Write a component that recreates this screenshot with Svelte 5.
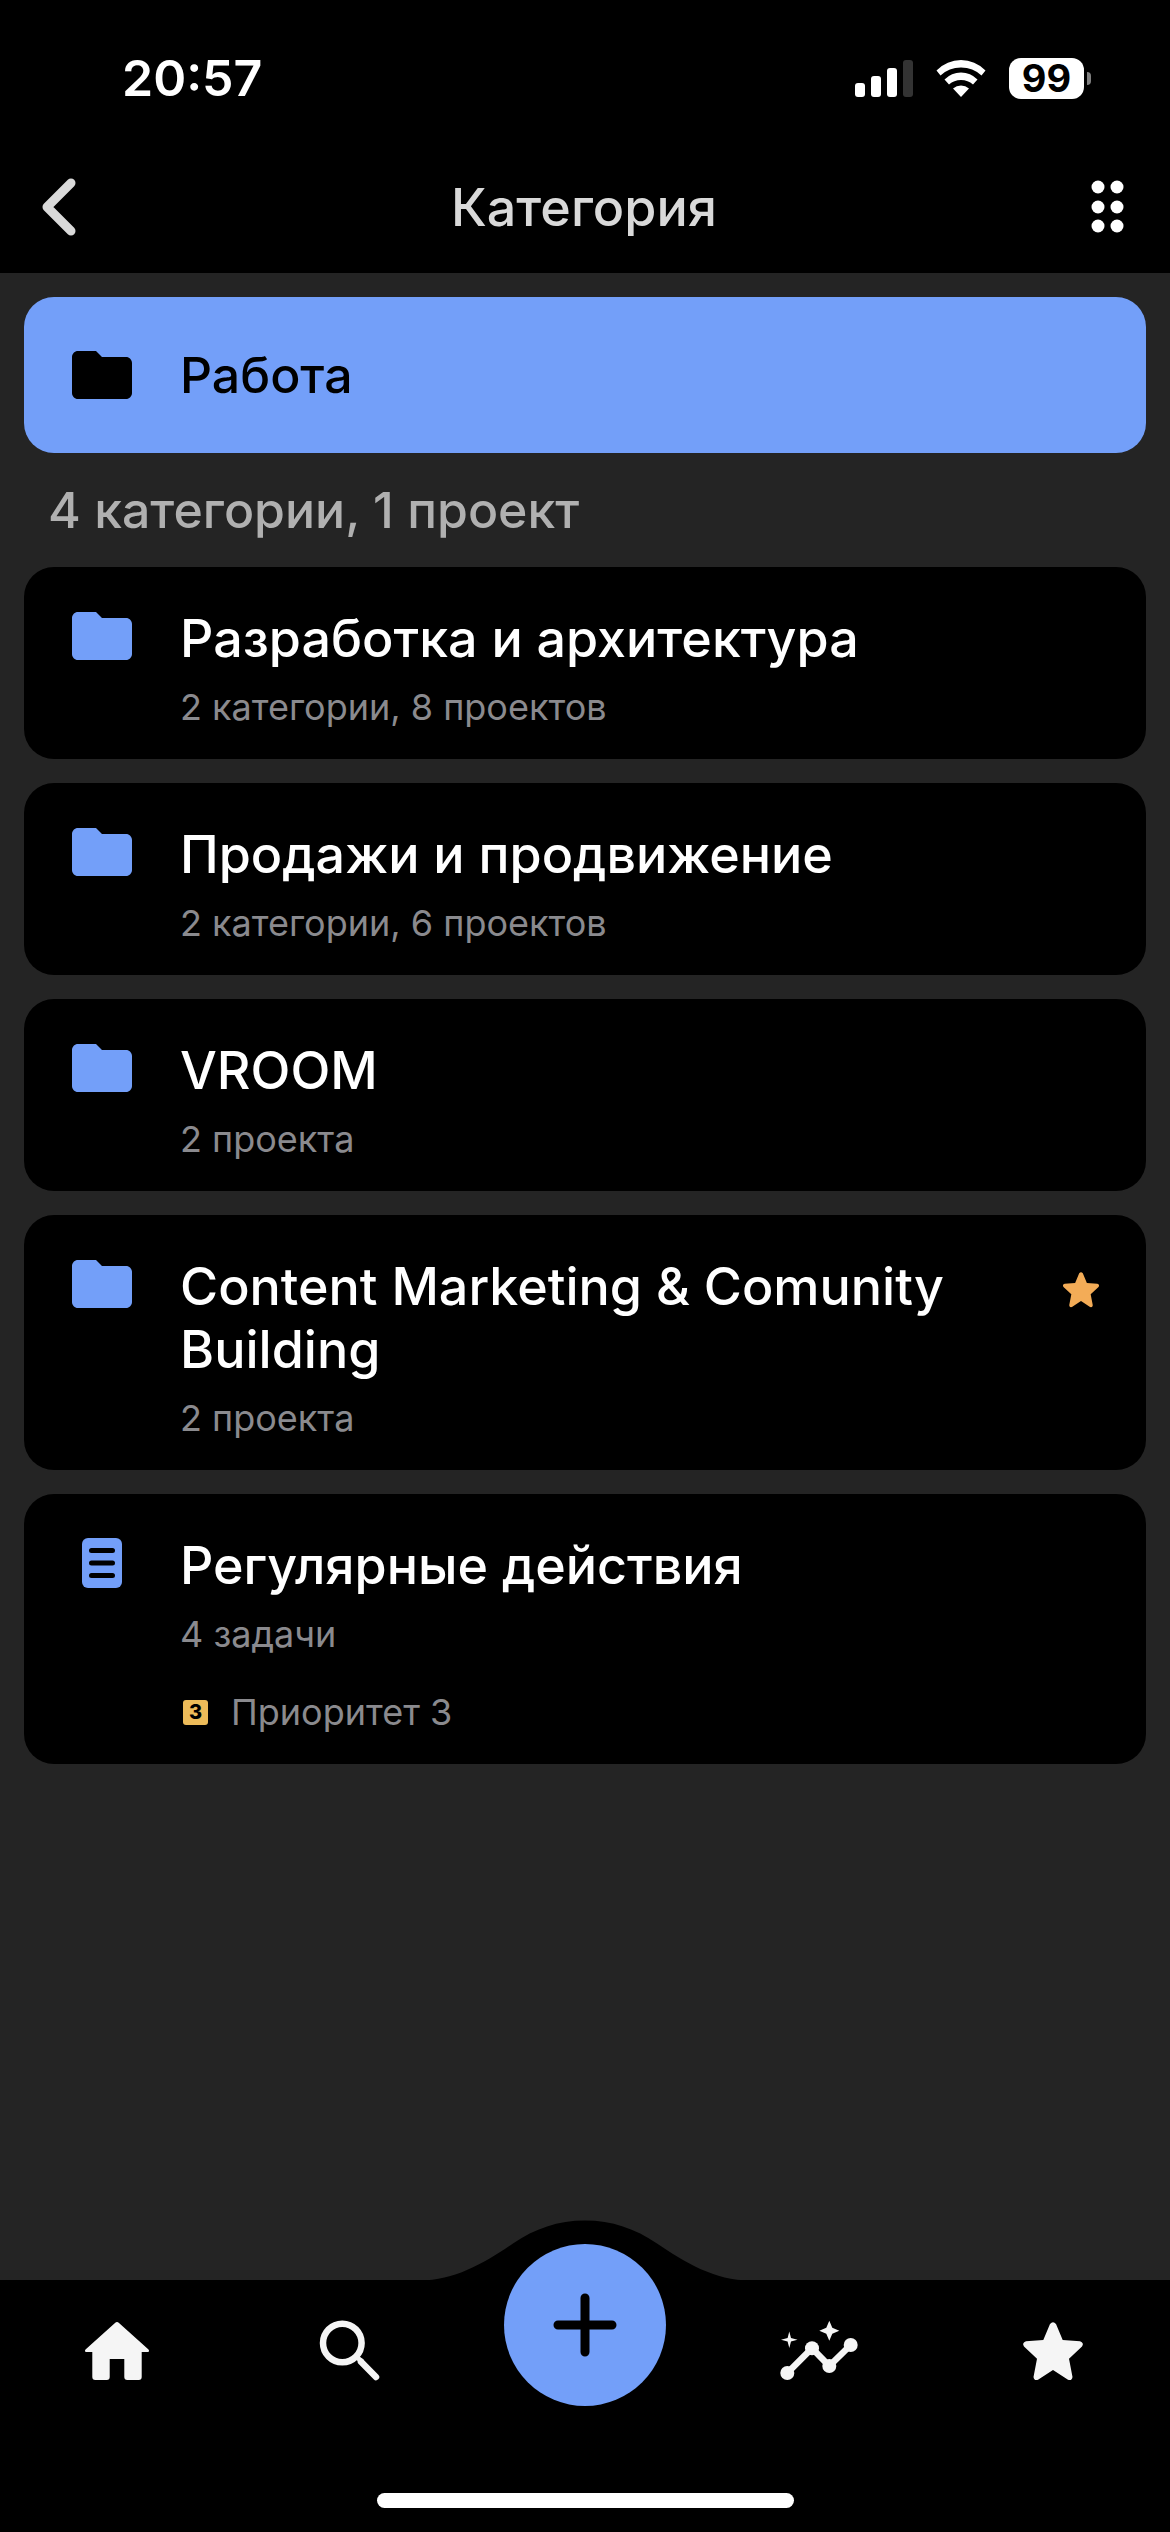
<script lang="ts">
	type Item = {
		kind: 'folder' | 'project'
		title: string
		info: string
		starred?: boolean
		priority?: number
	}

	const category = 'Работа'
	const summary = '4 категории, 1 проект'

	const items: Item[] = [
		{ kind: 'folder', title: 'Разработка и архитектура', info: '2 категории, 8 проектов' },
		{ kind: 'folder', title: 'Продажи и продвижение', info: '2 категории, 6 проектов' },
		{ kind: 'folder', title: 'VROOM', info: '2 проекта' },
		{
			kind: 'folder',
			title: 'Content Marketing & Comunity Building',
			info: '2 проекта',
			starred: true
		},
		{ kind: 'project', title: 'Регулярные действия', info: '4 задачи', priority: 3 }
	]

	const starPath =
		'M45 22Q48 18.500 51 22L57.700 38L75 39.300Q79.500 41 77 44.500L64 56.700L67.500 75Q67 79 63 77.800L48 68L33 77.800Q29 79 28.500 75L32 56.700L19 44.500Q16.500 41 21 39.300L38.300 38Z'
</script>

{#snippet folder()}
	<svg class="icon" viewBox="0 0 24 24" aria-hidden="true">
		<path
			d="M10 4H4c-1.1 0-2 .9-2 2v12c0 1.1.9 2 2 2h16c1.1 0 2-.9 2-2V8c0-1.1-.9-2-2-2h-8l-2-2z"
		/>
	</svg>
{/snippet}

<div class="page">
	<header>
		<div class="status">
			<span class="time">20:57</span>
			<div class="indicators">
				<svg width="58" height="38" viewBox="0 0 58 38" aria-hidden="true">
					<rect x="0" y="24" width="10" height="14" rx="3" />
					<rect x="16" y="17" width="10" height="21" rx="3" />
					<rect x="32" y="9" width="10" height="29" rx="3" />
					<rect class="dim" x="48" y="1" width="10" height="37" rx="3" />
				</svg>
				<svg width="50" height="38" viewBox="0 0 50 38" aria-hidden="true">
					<path d="M0.500 11.500Q11 1 25 1T49.500 11.500L45.500 16.500Q37 8.500 25 8.500T4.500 16.500Z" />
					<path d="M8.500 20.500Q15.500 13.500 25 13.500T41.500 20.500L37 25.500Q32 21 25 21T13 25.500Z" />
					<path d="M17 29.500Q20.500 26.500 25 26.500T33 29.500L25 38Z" />
				</svg>
				<div class="battery">
					<span class="charge">99</span>
					<span class="nub"></span>
				</div>
			</div>
		</div>
		<div class="bar">
			<button type="button" aria-label="Назад">
				<svg width="36" height="60" viewBox="0 0 36 60" aria-hidden="true">
					<path class="chevron" d="M30 6L6 30L30 54" />
				</svg>
			</button>
			<h1>Категория</h1>
			<button type="button" aria-label="Меню">
				<svg width="33" height="54" viewBox="0 0 33 54" aria-hidden="true">
					{#each [7, 27, 46] as cy}
						<circle cx="7" {cy} r="6.5" />
						<circle cx="26" {cy} r="6.5" />
					{/each}
				</svg>
			</button>
		</div>
	</header>

	<main>
		<a class="card current" href="#current">
			{@render folder()}
			<h2>{category}</h2>
		</a>
		<p class="summary">{summary}</p>

		<ul>
			{#each items as item}
				<li>
					<a class="card" href="#item">
						{#if item.kind === 'folder'}
							{@render folder()}
						{:else}
							<svg class="icon" viewBox="0 0 72 72" aria-hidden="true">
								<rect x="16" y="11" width="40" height="50" rx="6" />
								<path class="lines" d="M25.500 23.500H46.500M25.500 36H46.500M25.500 48.500H46.500" />
							</svg>
						{/if}
						<div class="content">
							<h3>{item.title}</h3>
							<p>{item.info}</p>
							{#if item.priority}
								<p class="priority">
									<span class="badge" aria-hidden="true">{item.priority}</span>
									Приоритет {item.priority}
								</p>
							{/if}
						</div>
						{#if item.starred}
							<svg class="star" viewBox="0 0 96 96" aria-label="Избранное">
								<path d={starPath} />
							</svg>
						{/if}
					</a>
				</li>
			{/each}
		</ul>
	</main>

	<nav>
		<div class="tabs">
			<a href="#home" aria-label="Главная">
				<svg viewBox="0 0 96 96" aria-hidden="true">
					<path
						d="M46 21Q48 19 50 21L79.500 47.500Q81 50 78.500 50H72.700V75Q72.700 78 69.700 78H58.300Q55.300 78 55.300 75V57H40.700V75Q40.700 78 37.700 78H26.300Q23.300 78 23.300 75V50H17.500Q15 50 16.500 47.500Z"
					/>
				</svg>
			</a>
			<a href="#search" aria-label="Поиск">
				<svg viewBox="0 0 96 96" aria-hidden="true">
					<circle class="line" cx="39.3" cy="41" r="19.3" />
					<path class="line" d="M58 59.700L73 75" />
					<path d="M52 56L56 54L61 58L57 62Z" />
				</svg>
			</a>
			<div class="center">
				<svg class="bump" viewBox="0 0 330 60" aria-hidden="true">
					<path
						d="M0 60C35 60 65 42 93 23C115 8 138 0 165 0C192 0 215 8 237 23C265 42 295 60 330 60Z"
					/>
				</svg>
				<button class="add" type="button" aria-label="Добавить">
					<svg width="64" height="64" viewBox="0 0 64 64" aria-hidden="true">
						<path d="M32 5V59M5 32H59" />
					</svg>
				</button>
			</div>
			<a href="#stats" aria-label="Статистика">
				<svg viewBox="0 0 96 96" aria-hidden="true">
					<path class="line" d="M16.300 71L41 46.300L58.300 64L79.700 43" />
					<circle cx="16.3" cy="71" r="7" />
					<circle cx="41" cy="46.3" r="7" />
					<circle cx="58.3" cy="64" r="7" />
					<circle cx="79.7" cy="43" r="7" />
					<path
						d="M58.300 18.700L61.300 25.700L68.300 28.700L61.300 31.700L58.300 38.700L55.300 31.700L48.300 28.700L55.300 25.700Z"
					/>
					<path
						d="M18.300 29.500L20 36L26.500 37.700L20 39.400L18.300 46L16.600 39.400L10 37.700L16.600 36Z"
					/>
				</svg>
			</a>
			<a href="#favorites" aria-label="Избранное">
				<svg viewBox="0 0 96 96" aria-hidden="true">
					<path d={starPath} />
				</svg>
			</a>
		</div>
		<div class="home-indicator"></div>
	</nav>
</div>

<style>
	:global(body) {
		margin: 0;
		background: #242424;
	}
	.page {
		min-height: 100vh;
		display: flex;
		flex-direction: column;
		background: #242424;
		color: #fff;
		font-family: Inter, 'Liberation Sans', sans-serif;
	}
	h1,
	h2,
	h3,
	p,
	ul {
		margin: 0;
		padding: 0;
	}
	ul {
		list-style: none;
	}
	a {
		color: inherit;
		text-decoration: none;
	}
	button {
		border: 0;
		padding: 0;
		background: none;
		display: flex;
		cursor: pointer;
	}
	svg {
		display: block;
		flex: none;
		fill: currentColor;
	}

	header {
		background: #000;
		padding-bottom: 15px;
	}
	.status {
		height: 156px;
		padding: 0 79px 0 122px;
		display: flex;
		align-items: center;
		justify-content: space-between;
	}
	.time {
		font-size: 50px;
		font-weight: 600;
	}
	.indicators {
		display: flex;
		align-items: center;
		gap: 23px;
	}
	.dim {
		fill: #333;
	}
	.battery {
		display: flex;
		align-items: center;
		gap: 3px;
	}
	.charge {
		width: 75px;
		border-radius: 12px;
		background: #fff;
		color: #000;
		font-size: 38px;
		font-weight: 700;
		line-height: 41px;
		text-align: center;
	}
	.nub {
		width: 4px;
		height: 13px;
		border-radius: 0 4px 4px 0;
		background: #808080;
	}

	.bar {
		height: 102px;
		padding: 0 46px 0 41px;
		display: flex;
		align-items: center;
		justify-content: space-between;
	}
	.bar button {
		color: #fff;
	}
	.chevron {
		fill: none;
		stroke: #d9d9d9;
		stroke-width: 9;
		stroke-linecap: round;
		stroke-linejoin: round;
	}
	h1 {
		color: #d9d9d9;
		font-size: 52px;
		font-weight: 500;
	}

	main {
		flex: 1;
		padding: 24px 24px 60px;
	}
	.card {
		display: flex;
		align-items: flex-start;
		border-radius: 30px;
		padding: 40px 36px 31px 42px;
		background: #000;
	}
	.card.current {
		align-items: center;
		padding-top: 42px;
		padding-bottom: 42px;
		background: #739ff9;
		color: #000;
	}
	.icon {
		width: 72px;
		height: 72px;
		margin-right: 42px;
		fill: #739ff9;
	}
	.current .icon {
		fill: #000;
	}
	li .icon {
		margin-top: -7px;
	}
	.lines {
		stroke: #000;
		stroke-width: 5;
		stroke-linecap: round;
	}
	h2 {
		font-size: 50px;
		font-weight: 500;
	}
	.summary {
		padding: 0 24px;
		color: #b0b0b0;
		font-size: 50px;
		font-weight: 500;
		line-height: 114px;
	}
	ul {
		display: flex;
		flex-direction: column;
		gap: 24px;
	}
	.content {
		flex: 1;
	}
	h3 {
		font-size: 52px;
		font-weight: 500;
		line-height: 63px;
	}
	.content p {
		margin-top: 16px;
		color: #8a8a8e;
		font-size: 36px;
		line-height: 42px;
	}
	.content .priority {
		margin-top: 36px;
		display: flex;
		align-items: center;
		gap: 23px;
	}
	.badge {
		width: 25px;
		margin-left: 3px;
		border-radius: 3px;
		background: #edbb59;
		color: #000;
		font-size: 20px;
		font-weight: 800;
		line-height: 25px;
		text-align: center;
	}
	.star {
		width: 58px;
		height: 58px;
		margin-top: 5px;
		fill: #f3ac57;
	}

	nav {
		padding-bottom: 24px;
		background: #000;
		color: #f5f5f5;
	}
	.tabs {
		display: grid;
		grid-template-columns: repeat(5, 1fr);
		justify-items: center;
		padding: 22px 0 95px;
	}
	.tabs a svg {
		width: 96px;
		height: 96px;
	}
	.line {
		fill: none;
		stroke: currentColor;
		stroke-width: 6.5;
		stroke-linecap: round;
		stroke-linejoin: round;
	}
	.center {
		position: relative;
		width: 162px;
	}
	/* the bump and the round button rise above the edge of the nav */
	.bump {
		position: absolute;
		bottom: calc(100% + 21px);
		left: -84px;
		width: 330px;
		height: 61px;
		fill: #000;
	}
	.add {
		position: absolute;
		top: -58px;
		left: 0;
		width: 162px;
		height: 162px;
		border-radius: 50%;
		align-items: center;
		justify-content: center;
		background: #739ff9;
	}
	.add path {
		stroke: #000;
		stroke-width: 9;
		stroke-linecap: round;
	}
	.home-indicator {
		width: 417px;
		height: 15px;
		margin: 0 auto;
		border-radius: 8px;
		background: #fff;
	}
</style>
